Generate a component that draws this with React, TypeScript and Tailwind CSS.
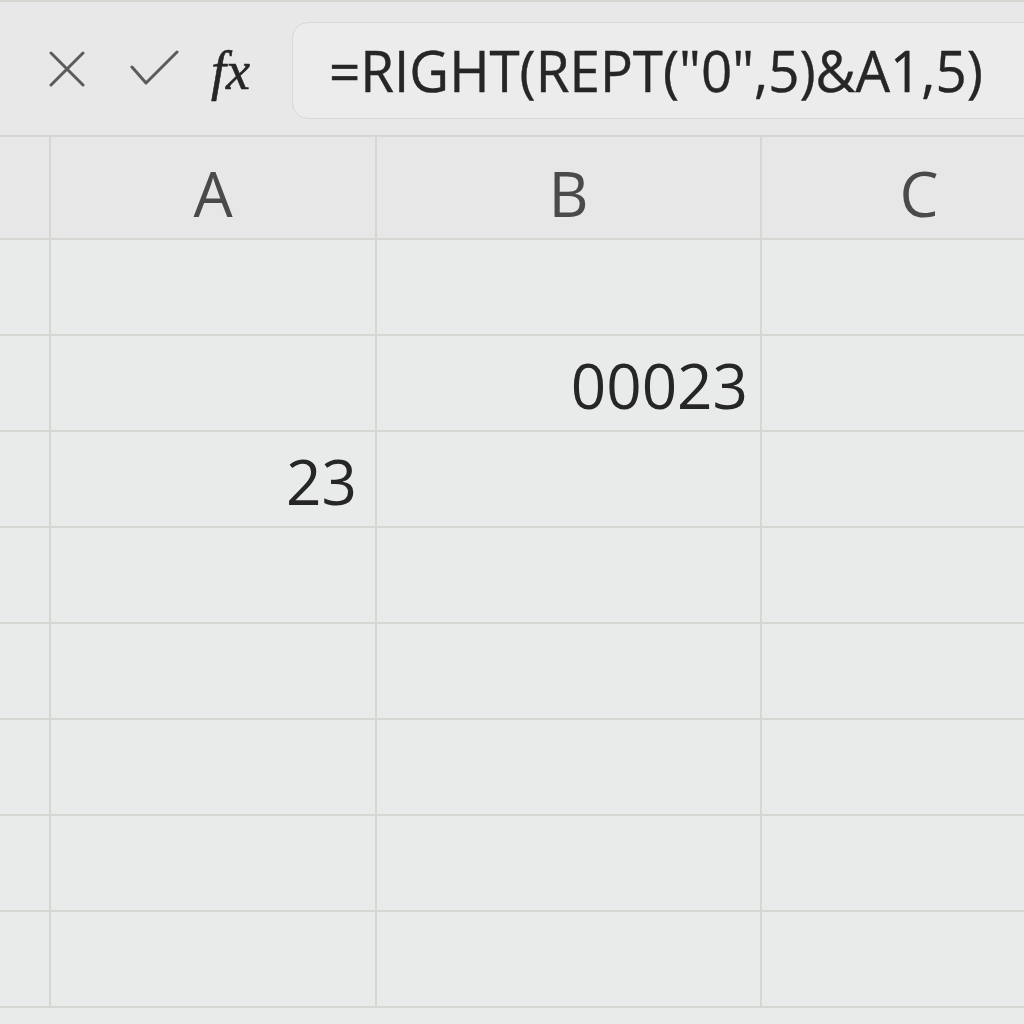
import React from "react";

const rows = [
  { a: "", b: "" },
  { a: "", b: "00023" },
  { a: "23", b: "" },
  { a: "", b: "" },
  { a: "", b: "" },
  { a: "", b: "" },
  { a: "", b: "" },
  { a: "", b: "" },
];

export default function App() {
  return (
    <div className="w-[1024px] h-[1024px] overflow-hidden bg-[#e9eaea] font-[family-name:Open_Sans,sans-serif] text-[#262626]">
      {/* formula bar */}
      <div className="h-[137px] border-t-2 border-b-2 border-[#d6d7d2] bg-[#e7e8e7] flex items-center">
        <div className="w-[292px] shrink-0 flex items-center h-full">
          <svg width="36" height="36" viewBox="0 0 36 36" className="ml-[49px]">
            <path d="M2 2 L34 34 M34 2 L2 34" stroke="#5b5b5b" strokeWidth="3" strokeLinecap="round" />
          </svg>
          <svg width="50" height="38" viewBox="0 0 50 38" className="ml-[45px]">
            <path d="M2 17 L16 33 L47 2" stroke="#5b5b5b" strokeWidth="3" fill="none" strokeLinecap="round" strokeLinejoin="round" />
          </svg>
          <span className="ml-[31px] font-[family-name:Liberation_Serif,serif] italic text-[54px] leading-none text-[#262626] [-webkit-text-stroke:0.6px_#262626] mt-1">
            fx
          </span>
        </div>
        <div className="flex-1 h-[97px] mt-1 -mr-6 rounded-2xl border border-[#d9dad5] bg-[#ebeceb] flex items-center pl-[36px]">
          <span className="text-[57px] leading-none scale-x-[0.96] origin-left whitespace-nowrap [-webkit-text-stroke:0.4px_#262626]">
            =RIGHT(REPT("0",5)&amp;A1,5)
          </span>
        </div>
      </div>

      {/* sheet */}
      <div className="grid grid-cols-[51px_326px_385px_314px] w-[1076px]">
        <div className="h-[103px] border-r-2 border-b-2 border-[#d6d7d2] bg-[#e6e7e6]" />
        <div className="h-[103px] border-r-2 border-b-2 border-[#d6d7d2] bg-[#e6e7e6] flex items-center justify-center pt-3 text-[62px] text-[#4a4a4a]">
          A
        </div>
        <div className="h-[103px] border-r-2 border-b-2 border-[#d6d7d2] bg-[#e6e7e6] flex items-center justify-center pt-3 text-[62px] text-[#4a4a4a]">
          B
        </div>
        <div className="h-[103px] border-b-2 border-[#d6d7d2] bg-[#e6e7e6] flex items-center justify-center pt-3 text-[62px] text-[#4a4a4a]">
          C
        </div>
        {rows.map((r, i) => (
          <React.Fragment key={i}>
            <div className="h-[96px] border-r-2 border-b-2 border-[#d6d7d2]" />
            <div className="h-[96px] border-r-2 border-b-2 border-[#d6d7d2] flex items-center justify-end pr-[18px] pt-1 text-[62px]">
              {r.a}
            </div>
            <div className="h-[96px] border-r-2 border-b-2 border-[#d6d7d2] flex items-center justify-end pr-[12px] pt-1 text-[62px]">
              {r.b}
            </div>
            <div className="h-[96px] border-b-2 border-[#d6d7d2]" />
          </React.Fragment>
        ))}
      </div>
    </div>
  );
}
